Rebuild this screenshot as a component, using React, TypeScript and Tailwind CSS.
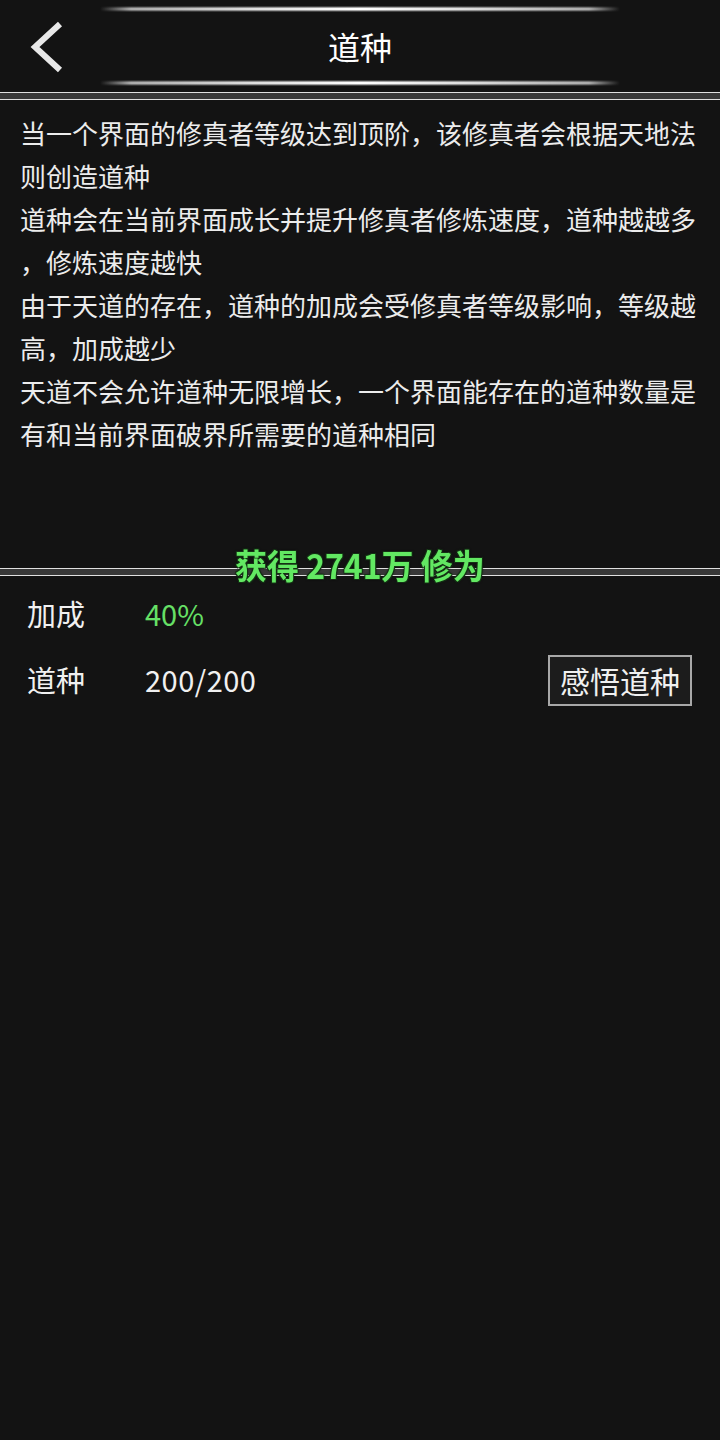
import React from "react";

const lines = [
  "当一个界面的修真者等级达到顶阶，该修真者会根据天地法",
  "则创造道种",
  "道种会在当前界面成长并提升修真者修炼速度，道种越越多",
  "，修炼速度越快",
  "由于天道的存在，道种的加成会受修真者等级影响，等级越",
  "高，加成越少",
  "天道不会允许道种无限增长，一个界面能存在的道种数量是",
  "有和当前界面破界所需要的道种相同",
];

function Glow({ top }: { top: string }) {
  return (
    <div className={`absolute left-[100px] right-[100px] ${top} h-[6px] flex flex-col justify-center`}>
      <div className="h-[6px] w-full bg-[linear-gradient(to_right,rgba(255,255,255,0),rgba(210,210,210,0.8)_6%,rgba(235,235,235,0.95)_30%,#ffffff_50%,rgba(235,235,235,0.95)_70%,rgba(210,210,210,0.8)_94%,rgba(255,255,255,0))] [mask-image:linear-gradient(to_bottom,transparent,black_40%,black_60%,transparent)]" />
    </div>
  );
}

function Bar() {
  return <div className="h-[8px] border-y border-[#e0e0e0] bg-[#383838]" />;
}

export default function App() {
  return (
    <div
      className="w-[720px] h-[1440px] bg-[#131313] text-[#f0f0f0] flex flex-col"
      style={{ fontFamily: '"Noto Sans CJK SC", "Noto Sans", sans-serif' }}
    >
      <div className="relative h-[92px] flex items-center justify-center">
        <Glow top="top-[6px]" />
        <Glow top="top-[80px]" />
        <svg className="absolute left-[26px] top-[20px]" width="44" height="54" viewBox="0 0 44 54">
          <polyline points="34,4 9,27 34,50" fill="none" stroke="#e8e8e8" strokeWidth="6" strokeLinecap="butt" strokeLinejoin="miter" />
        </svg>
        <div className="text-[32px] leading-none text-white">道种</div>
      </div>
      <Bar />
      <div className="h-[468px] pl-[20px] pt-[11px] text-[26px] leading-[43px] text-[#ececec]">
        {lines.map((l, i) => (
          <div key={i} className="whitespace-nowrap">{l}</div>
        ))}
      </div>
      <div className="relative">
        <Bar />
        <div className="absolute left-0 right-0 top-[-23px] flex justify-center">
          <span className="inline-block scale-x-[0.94] text-[34px] leading-[40px] font-bold text-[#62e862] [text-shadow:1px_1px_0_#143014,-1px_-1px_0_#143014,1px_-1px_0_#143014,-1px_1px_0_#143014,0_0_3px_#000]">
            获得 2741万 修为
          </span>
        </div>
      </div>
      <div className="flex flex-col pl-[27px] pr-[28px] pt-[5px]">
        <div className="h-[66px] flex items-center text-[29px]">
          <span className="w-[118px]">加成</span>
          <span className="text-[#66e066]">40%</span>
        </div>
        <div className="h-[66px] flex items-center text-[29px]">
          <span className="w-[118px]">道种</span>
          <span className="tracking-[0.5px]">200/200</span>
          <button className="ml-auto w-[144px] h-[51px] border-2 border-[#a8a8a8] bg-[#1c1c1c] text-[30px] leading-none text-[#f0f0f0] flex items-center justify-center">
            感悟道种
          </button>
        </div>
      </div>
    </div>
  );
}
